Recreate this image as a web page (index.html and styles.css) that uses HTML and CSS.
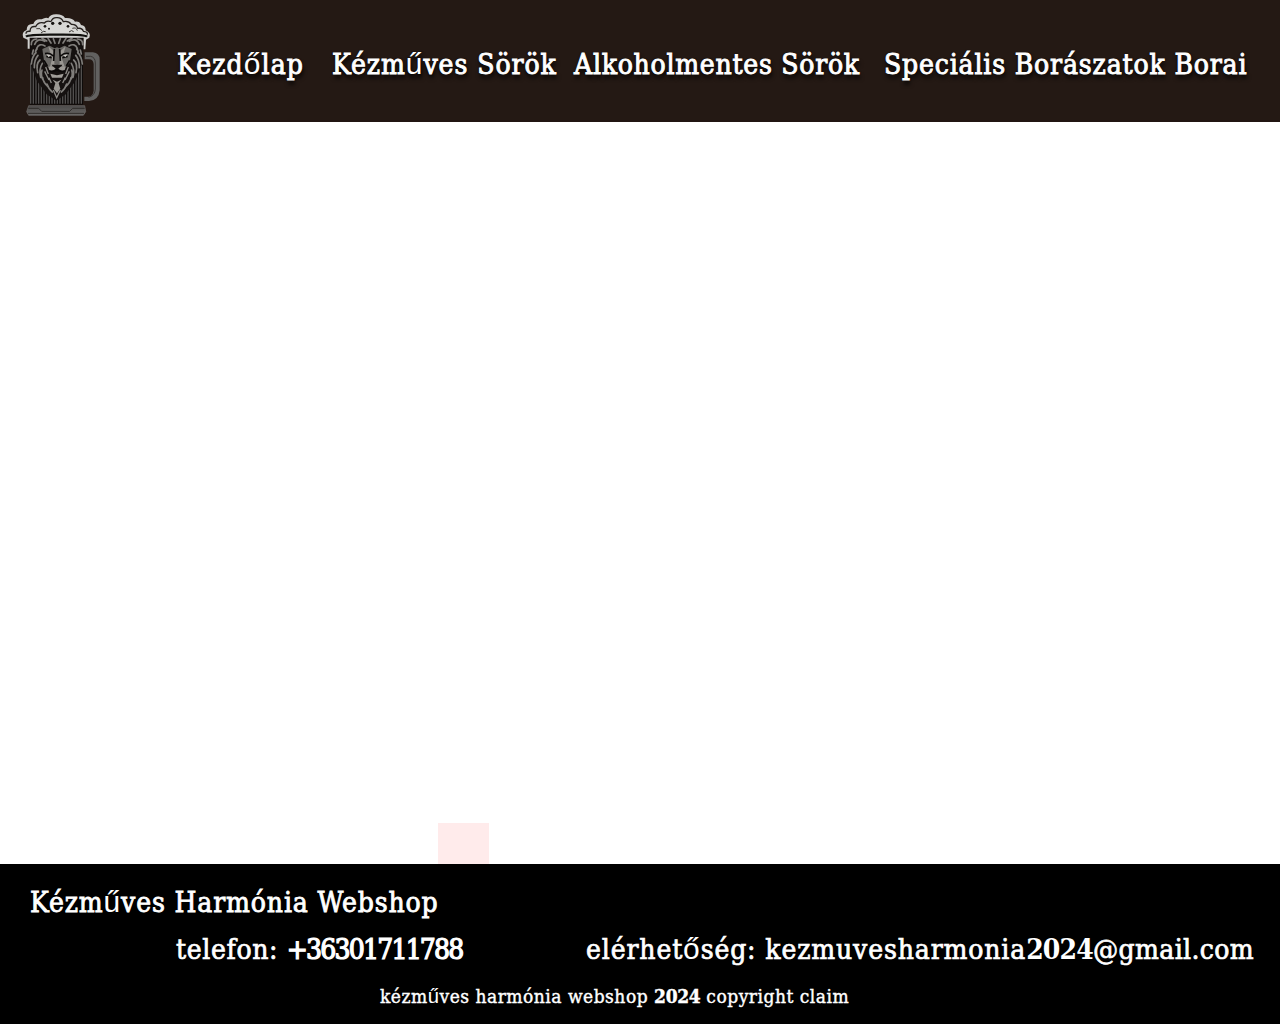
FILE: index.html
```html
<!DOCTYPE html>
<html lang="hu">
<head>
<meta charset="utf-8">
<title>Kézműves Harmónia Webshop</title>
<link rel="stylesheet" href="styles.css">
</head>
<body>
<header class="header">
  <svg class="logo" viewBox="0 0 390 366" aria-hidden="true">
    <defs>
      <linearGradient id="steel" x1="0" y1="0" x2="0" y2="1"><stop offset="0" stop-color="#4c4a49"/><stop offset="1" stop-color="#686766"/></linearGradient>
    </defs>
    <!-- handle -->
    <path d="M254 157h25q20 2 20 22v92q-3 31-32 32h-14v-13h13q13-2 15-18v-80q-1-14-14-14h-13z" fill="#626160"/>
    <path d="M258 169h14q14 3 14 20v78q-1 20-20 25" fill="none" stroke="#393634" stroke-width="3"/>
    <!-- glass and base -->
    <path d="M90 120h159v194H90z" fill="#0e0b0a"/>
    <path d="M92 190v121M100 195v116M108 205v106M116 215v96M124 230v81M132 243v68M140 256v55M148 268v43M156 280v31M164 286v25M172 286v25M180 284v27M188 276v35M196 265v46M204 252v59M212 240v71M220 225v86M228 211v100M236 200v111M244 190v121" stroke="#514f4e" stroke-width="4"/>
    <path d="M86 317h168l3 18-7 11H86l-6-11z" fill="url(#steel)" stroke="#6c6a69" stroke-width="2"/>
    <path d="M85 325h31l9 9h84l9-9h36M84 340h168" fill="none" stroke="#302d2b" stroke-width="3"/>
    <!-- mane -->
    <path d="M91 112h160l-4 77-22 56-28 38-28 19-29-19-29-40-20-54z" fill="#151110"/>
    <g fill="none" stroke="#807e7b" stroke-width="5" stroke-linecap="round">
      <path d="M94 134q-1-16 16-17M94 192q2-22 14-35M103 203q-1-23 11-37M113 218q-6-27 7-38M122 232q-6-24 5-42M133 246q-13-18-7-36M146 262q-17-15-18-29M157 276q-11-8-16-24M100 150l-3 12M107 160q-2-8 4-13"/>
      <path d="M248 134q1-16-16-17M247 192q-2-22-14-35M238 203q1-23-11-37M228 218q6-27-7-38M219 232q6-24-5-42M208 246q13-18 7-36M195 262q17-15 18-29M184 276q11-8 16-24M241 150l3 12M234 160q2-8-4-13"/>
      <path d="M104 133q8-21 30-9M110 145q8-17 25-7M238 133q-8-21-30-9M232 145q-8-17-25-7M126 115l14 8M144 115l9 14M198 115l-9 14M216 115l-14 8M160 116l5 14M181 116l-5 14"/>
    </g>
    <!-- face -->
    <path d="M127 147l22-10 15 8 7-3 7 3 15-8 22 10-6 42-20 21-18-8-18 8-20-21z" fill="#696764"/>
    <path d="M145 139l18 16v38h16v-38l18-16-11 37 8 25-22-8-22 8 6-24z" fill="#9b9893"/>
    <path d="M135 161q14-4 25 7M182 168q11-11 25-7M139 169l16 4M187 173l16-4M163 147l-2 36M179 147l2 36M171 199v12M148 213q13 3 23-3 10 6 23 3M132 181l10 17M209 181l-10 17" fill="none" stroke="#0b0908" stroke-width="5"/>
    <path d="M155 194h32l-6 11-10 5-10-5z" fill="#110e0d"/>
    <path d="M139 163l14 2-7 7zM203 163l-14 2 7 7z" fill="#c9c7c3"/>
    <path d="M145 202q11-8 22 4-8 8-19 4zM197 202q-11-8-22 4 8 8 19 4z" fill="#9c9994"/>
    <path d="M151 221l5 12h30l5-12-20 5z" fill="#a19e99"/>
    <path d="M158 239l8 11-5 16 10 14 10-14-5-16 8-11-13 6z" fill="#9b9893"/>
    <path d="M137 201l8 21M205 201l-8 21M134 214l13 26M208 214l-13 26M154 249l-7-16M188 249l8-16M160 270l10 23 11-23" fill="none" stroke="#8d8b87" stroke-width="4"/>
    <!-- foam -->
    <path d="M70 113q-7-16 10-23 0-20 20-18 5-17 25-14 13-8 20-3 6-13 25-12 18 0 25 11 22-2 30 11 14-2 18 10 14 1 14 16 17 8 11 22l-10 6-2 29h-5v-35H89v33h-6v-27z" fill="#d0d0ce"/>
    <path d="M78 101q0-9 12-7 1-17 17-14 8-16 26-11 7-9 20-4 5-13 17-12 14-1 20 12 15-4 24 8 15-1 19 12 14-2 17 9 14 1 12 10" fill="none" stroke="#26211e" stroke-width="4"/>
    <path d="M85 104l12-14 17-3 16-14 19-5 20-11 20 11 20 5 17 13 19 4 8 14z" fill="#d8d8d5"/>
    <path d="M78 110q8-7 93-6 84-1 90 6" fill="none" stroke="#11100e" stroke-width="7"/>
    <g fill="#171412"><circle cx="158" cy="70" r="5"/><circle cx="180" cy="70" r="5"/><circle cx="135" cy="79" r="4"/><circle cx="147" cy="86" r="3"/><circle cx="204" cy="79" r="4"/></g>
    <path d="M109 86q14-3 16 6M123 99q7-8 14-4M207 96q8-8 14-1M217 85q12-4 15 7" fill="none" stroke="#3b3835" stroke-width="3"/>
  </svg>
  <nav class="nav">
    <a class="link home">Kezd<span class="plain">ő</span>lap</a>
    <a class="link beers">Kézm<span class="plain">ű</span>ves Sörök</a>
    <a class="link alcohol-free">Alkoholmentes Sörök</a>
    <a class="link wines">Speciális Borászatok Borai</a>
  </nav>
</header>
<main class="main"><div class="marker"></div></main>
<footer class="footer">
  <div class="brand">Kézm<span class="plain">ű</span>ves Harmónia Webshop</div>
  <div class="contacts">
    <span class="phone">telefon: <span class="number">+36301711788</span></span>
    <span class="email">elérhet<span class="plain">ő</span>ség: kezmuvesharmonia<b class="year">2024</b><span class="domain">@gmail.com</span></span>
  </div>
  <div class="copyright">kézm<span class="plain">ű</span>ves harmónia webshop <b class="claim-year">2024</b> copyright claim</div>
</footer>
</body>
</html>
```
FILE: styles.css
```css
* { box-sizing: border-box; }
body {
  margin: 0;
  height: 1024px;
  display: flex;
  flex-direction: column;
  overflow: hidden;
  background: #fff;
  color: #fff;
  font-family: "DejaVu Serif Condensed", "DejaVu Serif", serif;
  font-stretch: condensed;
  font-size: 28px;
  line-height: 38px;
  white-space: nowrap;
}
.header {
  display: flex;
  height: 122px;
  background: #241914;
  border-bottom: 2px solid #211512;
}
.logo { flex: none; width: 130px; height: 122px; }
.nav {
  display: grid;
  grid-template-columns: 155px 242px 310px 370px;
  padding: 46px 0 0 47px;
  text-shadow: 0 0 2px #000, 1px 4px 4px #000;
  -webkit-text-stroke: .9px #fff;
}
.plain {
  font-family: "Liberation Sans", sans-serif;
  font-size: 1.07em;
  line-height: 1;
  -webkit-text-stroke: 0;
}
.home { letter-spacing: 1.1px; }
.beers { letter-spacing: .93px; }
.alcohol-free { letter-spacing: .73px; }
.wines { letter-spacing: .83px; }
.main { flex: 1; display: flex; align-items: flex-end; padding-left: 438px; }
.marker { width: 51px; height: 41px; background: #ffebeb; }
.footer { height: 160px; padding-top: 20px; background: #000; }
.brand { padding-left: 30px; letter-spacing: .85px; -webkit-text-stroke: .8px #fff; }
.contacts {
  display: grid;
  grid-template-columns: 410px auto;
  margin-top: 9px;
  padding-left: 176px;
  -webkit-text-stroke: .7px #fff;
}
.phone { letter-spacing: .62px; }
.number { letter-spacing: -1.8px; -webkit-text-stroke: 1.2px #fff; }
.email { letter-spacing: .85px; }
.year { letter-spacing: -.8px; -webkit-text-stroke: 0; }
.domain { letter-spacing: .35px; }
.copyright {
  padding: 13px 0 0 380px;
  font-size: 19px;
  line-height: 28px;
  letter-spacing: .5px;
  -webkit-text-stroke: .4px #fff;
}
.claim-year { letter-spacing: -.3px; }
```
